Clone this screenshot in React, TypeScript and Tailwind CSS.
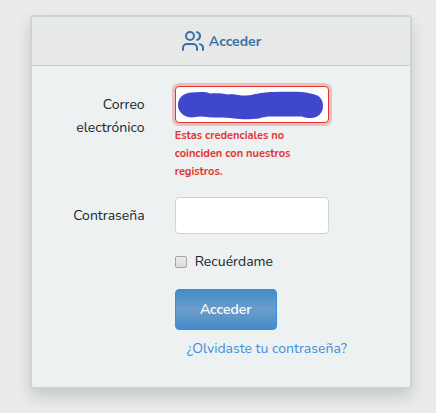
import React from "react";
import { Users } from "lucide-react";

function Redaction() {
  return (
    <svg
      aria-hidden="true"
      viewBox="0 0 154 37"
      className="pointer-events-none absolute inset-0 h-full w-full"
      fill="#3f48cc"
    >
      <path d="M3 19C3 11 9 7 17 6.500C24 6 31 5.500 35 7.500C42 7 48 7.500 53 8.500C59 8 62 9 66 9.500C72 9.500 77 9 80 8C87 7 90 6.500 95 6C104 6 116 5.500 127 6C132 6.500 137 7.500 141 9C146 11 148 15 148 20C148 27 143 32 136 32C132 32 130 31.500 127 30.500H96C92 30.500 88 31 84 32.500C76 33.500 66 33.500 59 32.500C54 31.500 49 31.500 44 31.500C37 31.500 31 31 25 30.500C20 31 17 32 13 31C7 29 3 25 3 19Z" />
    </svg>
  );
}

export default function App() {
  return (
    <main
      className="flow-root min-h-screen bg-[#eaecea] text-sm leading-[23px] text-[#212529]"
      style={{ fontFamily: 'Nunito, Lato, "Open Sans", sans-serif' }}
    >
      <section className="mt-[15px] mr-6 mb-6 ml-[30px] rounded border-2 border-[#ced2d4] bg-[#edf1f2] shadow-[0_8px_16px_rgba(0,0,0,0.15)]">
        <header className="flex items-center justify-center gap-1 border-b border-[#c7ccd0] bg-[#e7e9e8] py-3 font-bold text-[#3a6ea8]">
          <Users size={24} strokeWidth={2} />
          <h1>Acceder</h1>
        </header>

        <form
          className="flex flex-col gap-4 px-[5px] py-5"
          onSubmit={(event) => event.preventDefault()}
        >
          <div className="grid grid-cols-12">
            <label htmlFor="email" className="col-span-4 px-[15px] pt-[7px] text-right">
              Correo electrónico
            </label>
            <div className="col-span-6 px-[15px]">
              <div className="relative">
                <input
                  id="email"
                  type="email"
                  aria-invalid="true"
                  aria-describedby="email-error"
                  className="block h-[37px] w-full rounded border border-[#e3342f] bg-white px-3 shadow-[0_0_0_3px_rgba(227,52,47,0.25)] outline-none"
                />
                <Redaction />
              </div>
              <p id="email-error" className="mt-1 text-[11px] leading-[18px] font-bold text-[#e3342f]">
                Estas credenciales no coinciden con nuestros registros.
              </p>
            </div>
          </div>

          <div className="grid grid-cols-12">
            <label htmlFor="password" className="col-span-4 px-[15px] pt-[7px] text-right">
              Contraseña
            </label>
            <div className="col-span-6 px-[15px]">
              <input
                id="password"
                type="password"
                className="block h-[37px] w-full rounded border border-[#ced4da] bg-white px-3 outline-none"
              />
            </div>
          </div>

          <div className="grid grid-cols-12">
            <div className="col-span-6 col-start-5 flex items-center gap-2 px-[15px]">
              <input
                id="remember"
                type="checkbox"
                className="size-3 appearance-none rounded-xs border border-[#a5a5a5] bg-linear-to-b from-[#ececec] to-[#dcdcdc] checked:bg-[#3490dc]"
              />
              <label htmlFor="remember">Recuérdame</label>
            </div>
          </div>

          <div className="grid grid-cols-12">
            <div className="col-span-8 col-start-5 px-[15px]">
              <button
                type="submit"
                className="block h-[41px] w-[102px] rounded border border-[#3490dc] bg-linear-to-b from-[#428bca] via-[#6b9dc9] to-[#428bca] font-semibold text-white"
              >
                Acceder
              </button>
              <a href="#" className="inline-block px-3 py-[7px] whitespace-nowrap text-[#3f8fdc]">
                ¿Olvidaste tu contraseña?
              </a>
            </div>
          </div>
        </form>
      </section>
    </main>
  );
}
